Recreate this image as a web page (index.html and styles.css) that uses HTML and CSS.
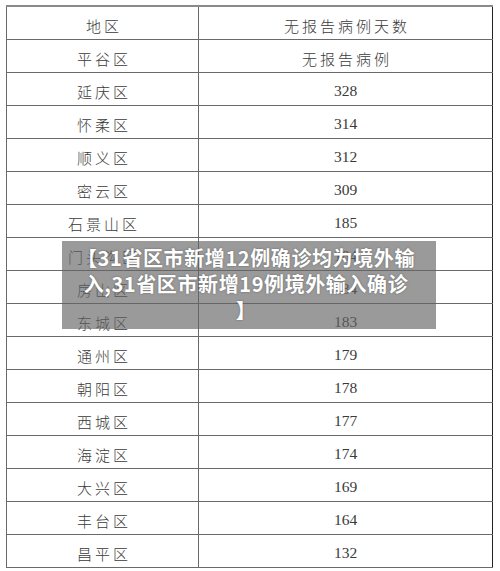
FILE: index.html
```html
<!DOCTYPE html>
<html lang="zh">
<head>
<meta charset="utf-8">
<link rel="stylesheet" href="styles.css">
</head>
<body>
<div class="page">
  <table class="tbl">
    <tr><td class="name">地区</td><td class="name">无报告病例天数</td></tr>
    <tr><td class="name">平谷区</td><td class="name">无报告病例</td></tr>
    <tr><td class="name">延庆区</td><td class="num">328</td></tr>
    <tr><td class="name">怀柔区</td><td class="num">314</td></tr>
    <tr><td class="name">顺义区</td><td class="num">312</td></tr>
    <tr><td class="name">密云区</td><td class="num">309</td></tr>
    <tr><td class="name">石景山区</td><td class="num">185</td></tr>
    <tr><td class="name">门头沟区</td><td class="num">184</td></tr>
    <tr><td class="name">房山区</td><td class="num">184</td></tr>
    <tr><td class="name">东城区</td><td class="num">183</td></tr>
    <tr><td class="name">通州区</td><td class="num">179</td></tr>
    <tr><td class="name">朝阳区</td><td class="num">178</td></tr>
    <tr><td class="name">西城区</td><td class="num">177</td></tr>
    <tr><td class="name">海淀区</td><td class="num">174</td></tr>
    <tr><td class="name">大兴区</td><td class="num">169</td></tr>
    <tr><td class="name">丰台区</td><td class="num">164</td></tr>
    <tr><td class="name">昌平区</td><td class="num">132</td></tr>
  </table>
  <div class="caption">【31省区市新增12例确诊均为境外输<br>入,31省区市新增19例境外输入确诊<br>】</div>
</div>
</body>
</html>
```
FILE: styles.css
```css
html, body {
  margin: 0;
  padding: 0;
  background: #fff;
}
.page {
  position: relative;
  width: 500px;
  height: 571px;
  overflow: hidden;
  padding-top: 5px;
  box-sizing: border-box;
}
.tbl {
  margin-left: 6px;
  border-collapse: collapse;
  width: 487px;
  table-layout: fixed;
}
.tbl td {
  border: 1px solid #6a6a6a;
  height: 33px;
  padding: 5px 0 0 0;
  box-sizing: border-box;
  text-align: center;
  vertical-align: middle;
  color: #3a3a3a;
}
.tbl td:first-child {
  width: 192px;
}
.tbl td:last-child {
  border-right-color: #222;
}
.tbl tr:first-child td {
  border-top: 2px solid #8a8a8a;
}
.name {
  font-family: "Liberation Serif", "Noto Sans CJK SC", serif;
  font-weight: 300;
  font-size: 15px;
  letter-spacing: 3px;
  text-indent: 3px;
}
.num {
  font-family: "Liberation Serif", serif;
  font-size: 15.5px;
}
.caption {
  position: absolute;
  left: 62px;
  top: 241px;
  width: 374px;
  height: 88px;
  box-sizing: border-box;
  padding: 4px 6px 0 0;
  background: rgba(100, 100, 100, 0.65);
  color: #fff;
  font-family: "Noto Sans CJK SC", sans-serif;
  font-weight: 700;
  font-size: 20px;
  letter-spacing: 0.6px;
  line-height: 26px;
  text-align: center;
  white-space: nowrap;
  text-shadow: 0 0 2px rgba(60, 60, 60, 0.6);
}
```
